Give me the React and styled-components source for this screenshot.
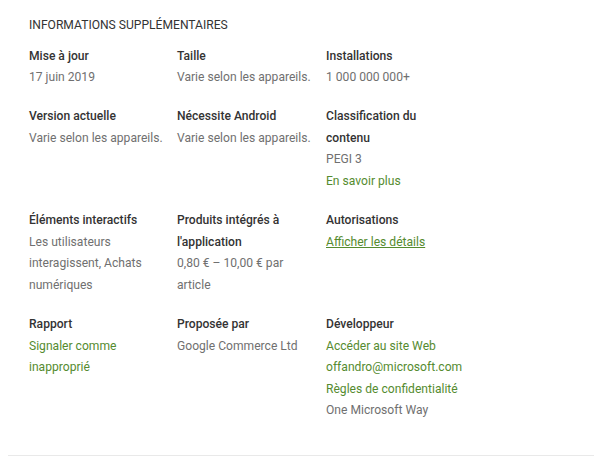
import React from 'react';
import styled, { createGlobalStyle } from 'styled-components';

const GlobalStyle = createGlobalStyle`
  body {
    margin: 0;
    background: #fff;
    font-family: Roboto, "Liberation Sans", Arial, sans-serif;
  }
`;

const Section = styled.section`
  margin: 0 6px 0 8px;
  padding: 15px 0 33px 21px;
  border-bottom: 1px solid #e9e9e9;
`;

const Title = styled.h2`
  margin: 0 0 9px;
  font-size: 12.1px;
  line-height: 21.6px;
  font-weight: 400;
  color: #333;
  text-transform: uppercase;
`;

const Grid = styled.div`
  display: grid;
  grid-template-columns: 148px 149px 160px;
  row-gap: 17.5px;
`;

const Item = styled.div`
  display: flex;
  flex-direction: column;
  max-width: 135px;
`;

const Label = styled.div`
  font-size: 12.1px;
  line-height: 21.6px;
  font-weight: 500;
  color: #333;
`;

const Value = styled.div`
  font-size: 12.1px;
  line-height: 21.6px;
  font-weight: 400;
  color: ${(p) => (p.$link ? '#558b2f' : '#707070')};
  text-decoration: ${(p) => (p.$underline ? 'underline' : 'none')};
`;

const items = [
  { label: 'Mise à jour', values: [{ text: '17 juin 2019' }] },
  { label: 'Taille', values: [{ text: 'Varie selon les appareils.' }] },
  { label: 'Installations', values: [{ text: '1 000 000 000+' }] },
  { label: 'Version actuelle', values: [{ text: 'Varie selon les appareils.' }] },
  { label: 'Nécessite Android', values: [{ text: 'Varie selon les appareils.' }] },
  {
    label: 'Classification du contenu',
    values: [{ text: 'PEGI 3' }, { text: 'En savoir plus', link: true }]
  },
  {
    label: 'Éléments interactifs',
    values: [{ text: 'Les utilisateurs interagissent, Achats numériques' }]
  },
  {
    label: "Produits intégrés à l'application",
    values: [{ text: '0,80 € – 10,00 € par article' }]
  },
  {
    label: 'Autorisations',
    values: [{ text: 'Afficher les détails', link: true, underline: true }]
  },
  {
    label: 'Rapport',
    values: [{ text: 'Signaler comme inapproprié', link: true }]
  },
  { label: 'Proposée par', values: [{ text: 'Google Commerce Ltd' }] },
  {
    label: 'Développeur',
    values: [
      { text: 'Accéder au site Web', link: true },
      { text: 'offandro@microsoft.com', link: true },
      { text: 'Règles de confidentialité', link: true },
      { text: 'One Microsoft Way' }
    ]
  }
];

export default function App() {
  return (
    <>
      <GlobalStyle />
      <Section>
        <Title>Informations supplémentaires</Title>
        <Grid>
          {items.map((item) => (
            <Item key={item.label}>
              <Label>{item.label}</Label>
              {item.values.map((v) => (
                <Value key={v.text} $link={v.link} $underline={v.underline}>
                  {v.text}
                </Value>
              ))}
            </Item>
          ))}
        </Grid>
      </Section>
    </>
  );
}
